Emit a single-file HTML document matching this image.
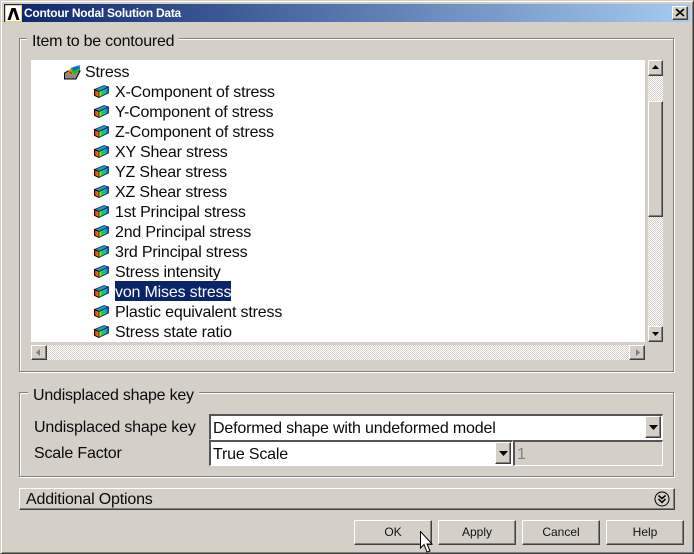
<!DOCTYPE html>
<html>
<head>
<meta charset="utf-8">
<style>
html,body{margin:0;padding:0;background:#d4d0c8;}
body{width:694px;height:554px;position:relative;overflow:hidden;font-family:"Liberation Sans",sans-serif;color:#000;}
.a{position:absolute;box-sizing:border-box;}
.t{position:absolute;white-space:nowrap;font-size:16px;letter-spacing:-0.18px;line-height:20px;color:#0a0a0a;}
.group{position:absolute;box-sizing:border-box;border:1px solid #808080;box-shadow:1px 1px 0 #fff,inset 1px 1px 0 #fff;}
.legend{position:absolute;background:#d4d0c8;font-size:16px;letter-spacing:-0.22px;line-height:20px;padding:0 5px;white-space:nowrap;color:#0a0a0a;}
.btn{position:absolute;box-sizing:border-box;background:#d4d0c8;border-top:1px solid #fff;border-left:1px solid #fff;border-right:1px solid #404040;border-bottom:1px solid #404040;box-shadow:inset -1px -1px 0 #808080;}
.pb{position:absolute;box-sizing:border-box;top:520px;width:78px;height:25px;background:#d4d0c8;border-top:1px solid #fff;border-left:1px solid #fff;border-right:1px solid #404040;border-bottom:1px solid #404040;box-shadow:inset -1px -1px 0 #808080;font-size:12px;line-height:23px;text-align:center;color:#111;}
.sunken{position:absolute;box-sizing:border-box;border-top:2px solid #555;border-left:2px solid #555;border-right:1px solid #fff;border-bottom:1px solid #fff;}
svg{position:absolute;display:block;}
</style>
</head>
<body>
<svg width="0" height="0" style="position:absolute">
<defs>
<pattern id="chk" width="2" height="2" patternUnits="userSpaceOnUse">
<rect width="2" height="2" fill="#fff"/>
<rect width="1" height="1" fill="#d4d0c8"/>
<rect x="1" y="1" width="1" height="1" fill="#d4d0c8"/>
</pattern>
<linearGradient id="g" x1="0" y1="0" x2="1" y2="0">
<stop offset="0" stop-color="#e8e000"/><stop offset=".35" stop-color="#10d030"/><stop offset=".7" stop-color="#10b8c8"/><stop offset="1" stop-color="#1038d0"/>
</linearGradient>
<linearGradient id="f" x1="0" y1="0" x2="1" y2="0">
<stop offset="0" stop-color="#d81818"/><stop offset="1" stop-color="#f0a000"/>
</linearGradient>
<symbol id="cube" viewBox="0 0 15 13">
<path d="M0.5 4.5 L10 0.5 L14.5 2 L5 6.5Z" fill="#1a9ad0" stroke="#102060" stroke-width=".7"/>
<path d="M0.5 4.5 L5 6.5 V12.5 L0.5 10.5Z" fill="url(#f)" stroke="#000" stroke-width=".9"/>
<path d="M5 6.5 L14.5 2 V8 L5 12.5Z" fill="url(#g)" stroke="#101040" stroke-width=".7"/>
</symbol>
</defs>
</svg>

<!-- window frame -->
<div class="a" style="left:0;top:0;width:694px;height:554px;border-top:1px solid #d4d0c8;border-left:1px solid #d4d0c8;border-right:1px solid #404040;border-bottom:1px solid #404040;box-shadow:inset 1px 1px 0 #fff,inset -1px -1px 0 #808080;"></div>

<!-- title bar -->
<div class="a" style="left:4px;top:4px;width:686px;height:18px;background:linear-gradient(90deg,#0a246a,#a6caf0);"></div>
<svg style="left:5px;top:5px" width="17" height="17" viewBox="0 0 17 17">
<rect width="17" height="17" fill="#f0d070"/><rect x="1" y="1" width="15" height="15" fill="#fff"/>
<path d="M2.5 15 L6.5 3 H10.5 L14.5 15 H11.5 L8.5 6 L5.5 15Z" fill="#000"/>
</svg>
<div class="t" style="left:24px;top:4px;font-size:12px;font-weight:bold;line-height:18px;color:#fff;letter-spacing:-0.26px;">Contour Nodal Solution Data</div>
<div class="btn" style="left:672px;top:6px;width:16px;height:14px;"></div>
<svg style="left:675px;top:8px" width="10" height="10" viewBox="0 0 10 10"><path d="M1 1 L9 8 M9 1 L1 8" stroke="#000" stroke-width="1.7" fill="none"/></svg>

<!-- group 1 -->
<div class="group" style="left:19px;top:38px;width:655px;height:334px;"></div>
<div class="legend" style="left:27px;top:32px;">Item to be contoured</div>

<!-- list -->
<div class="a" style="left:31px;top:60px;width:614px;height:282px;background:#fff;"></div>

<svg style="left:64px;top:64px" width="17" height="16" viewBox="0 0 17 16">
<path d="M0.5 15 L0.5 9 L4 7 L16 7 L12 15Z" fill="#8a8a8a" stroke="#000" stroke-width="1"/>
<path d="M4 8 L7 4 L16 1 L16 6 L11 10Z" fill="#14c814"/>
<path d="M7 4 L16 1 L16 4 L10 7Z" fill="#1c60e0"/>
<path d="M4 8 L7 5 L9 10 L5 11Z" fill="#e8a000"/>
<path d="M5 8 L7 7 L8 10 L6 10Z" fill="#e01818"/>
<path d="M12 2 L16 1 L16 3Z" fill="#30b0e0"/>
</svg>
<div class="t" style="left:85px;top:63px;">Stress</div>

<svg style="left:94px;top:85px" width="15" height="13"><use href="#cube"/></svg>
<div class="t" style="left:115px;top:83px;">X-Component of stress</div>
<svg style="left:94px;top:105px" width="15" height="13"><use href="#cube"/></svg>
<div class="t" style="left:115px;top:103px;">Y-Component of stress</div>
<svg style="left:94px;top:125px" width="15" height="13"><use href="#cube"/></svg>
<div class="t" style="left:115px;top:123px;">Z-Component of stress</div>
<svg style="left:94px;top:145px" width="15" height="13"><use href="#cube"/></svg>
<div class="t" style="left:115px;top:143px;">XY Shear stress</div>
<svg style="left:94px;top:165px" width="15" height="13"><use href="#cube"/></svg>
<div class="t" style="left:115px;top:163px;">YZ Shear stress</div>
<svg style="left:94px;top:185px" width="15" height="13"><use href="#cube"/></svg>
<div class="t" style="left:115px;top:183px;">XZ Shear stress</div>
<svg style="left:94px;top:205px" width="15" height="13"><use href="#cube"/></svg>
<div class="t" style="left:115px;top:203px;">1st Principal stress</div>
<svg style="left:94px;top:225px" width="15" height="13"><use href="#cube"/></svg>
<div class="t" style="left:115px;top:223px;">2nd Principal stress</div>
<svg style="left:94px;top:245px" width="15" height="13"><use href="#cube"/></svg>
<div class="t" style="left:115px;top:243px;">3rd Principal stress</div>
<svg style="left:94px;top:265px" width="15" height="13"><use href="#cube"/></svg>
<div class="t" style="left:115px;top:263px;">Stress intensity</div>
<svg style="left:94px;top:285px" width="15" height="13"><use href="#cube"/></svg>
<div class="a" style="left:115px;top:281px;width:116px;height:20px;background:#0a246a;"></div>
<div class="t" style="left:115px;top:283px;color:#fff;">von Mises stress</div>
<svg style="left:94px;top:305px" width="15" height="13"><use href="#cube"/></svg>
<div class="t" style="left:115px;top:303px;">Plastic equivalent stress</div>
<svg style="left:94px;top:325px" width="15" height="13"><use href="#cube"/></svg>
<div class="t" style="left:115px;top:323px;">Stress state ratio</div>

<!-- vertical scrollbar -->
<svg style="left:648px;top:60px" width="15" height="282" shape-rendering="crispEdges"><rect width="15" height="282" fill="url(#chk)"/></svg>
<div class="btn" style="left:648px;top:60px;width:15px;height:16px;"></div>
<svg style="left:652px;top:65px" width="7" height="4"><path d="M3.5 0 L7 4 H0Z" fill="#000"/></svg>
<div class="btn" style="left:648px;top:101px;width:15px;height:116px;"></div>
<div class="btn" style="left:648px;top:326px;width:15px;height:16px;"></div>
<svg style="left:652px;top:332px" width="7" height="4"><path d="M0 0 H7 L3.5 4Z" fill="#000"/></svg>

<!-- horizontal scrollbar -->
<svg style="left:31px;top:345px" width="614" height="15" shape-rendering="crispEdges"><rect width="614" height="15" fill="url(#chk)"/></svg>
<div class="btn" style="left:31px;top:345px;width:16px;height:15px;"></div>
<svg style="left:36px;top:349px" width="4" height="7"><path d="M4 0 V7 L0 3.5Z" fill="#808080"/></svg>
<div class="btn" style="left:629px;top:345px;width:16px;height:15px;"></div>
<svg style="left:636px;top:349px" width="4" height="7"><path d="M0 0 V7 L4 3.5Z" fill="#808080"/></svg>

<!-- group 2 -->
<div class="group" style="left:19px;top:392px;width:655px;height:85px;"></div>
<div class="legend" style="left:28px;top:386px;">Undisplaced shape key</div>

<div class="t" style="left:34px;top:418px;">Undisplaced shape key</div>
<div class="t" style="left:34px;top:444px;">Scale Factor</div>

<!-- combo 1 -->
<div class="sunken" style="left:209px;top:414px;width:454px;height:26px;background:#fff;"></div>
<div class="t" style="left:213px;top:419px;">Deformed shape with undeformed model</div>
<div class="btn" style="left:645px;top:416px;width:16px;height:22px;"></div>
<svg style="left:649px;top:425px" width="9" height="5"><path d="M0 0 H9 L4.5 5Z" fill="#000"/></svg>

<!-- combo 2 -->
<div class="sunken" style="left:209px;top:440px;width:304px;height:26px;background:#fff;"></div>
<div class="t" style="left:213px;top:445px;">True Scale</div>
<div class="btn" style="left:495px;top:442px;width:16px;height:22px;"></div>
<svg style="left:499px;top:451px" width="9" height="5"><path d="M0 0 H9 L4.5 5Z" fill="#000"/></svg>

<!-- disabled field -->
<div class="sunken" style="left:513px;top:440px;width:150px;height:26px;"></div>
<div class="t" style="left:517px;top:445px;color:#808080;">1</div>

<!-- additional options -->
<div class="a" style="left:19px;top:488px;width:656px;height:22px;border-top:1px solid #fff;border-left:1px solid #fff;border-right:1px solid #404040;border-bottom:1px solid #404040;box-shadow:inset -1px -1px 0 #808080;"></div>
<div class="t" style="left:26px;top:490px;">Additional Options</div>
<svg style="left:654px;top:491px" width="16" height="16" viewBox="0 0 16 16">
<circle cx="8" cy="8" r="7" fill="none" stroke="#000" stroke-width="1"/>
<path d="M4.5 4.5 L8 7.5 L11.5 4.5 M4.5 8 L8 11.5 L11.5 8" fill="none" stroke="#000" stroke-width="1.5"/>
</svg>

<!-- buttons -->
<div class="pb" style="left:354px;">OK</div>
<div class="pb" style="left:438px;">Apply</div>
<div class="pb" style="left:522px;">Cancel</div>
<div class="pb" style="left:606px;">Help</div>

<!-- cursor -->
<svg style="left:420px;top:531px" width="13" height="23" viewBox="0 0 13 23">
<path d="M0.5 0.5 V17 L4 13.5 L7 21 L10 20 L7 13 H12Z" fill="#fff" stroke="#000" stroke-width="1"/>
</svg>
</body>
</html>
